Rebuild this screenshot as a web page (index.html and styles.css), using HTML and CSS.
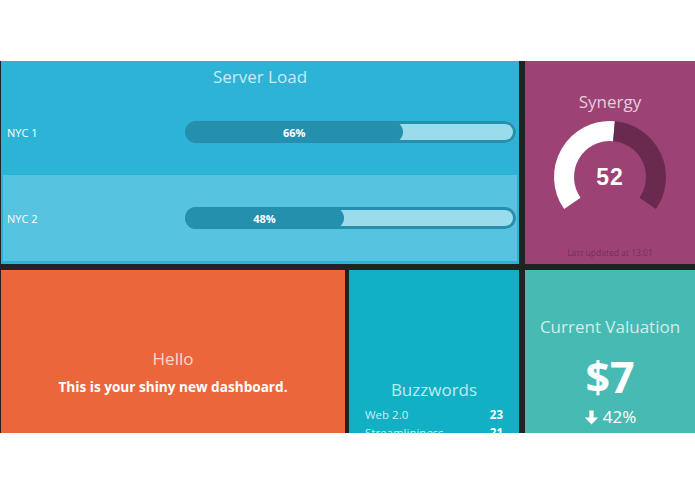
FILE: index.html
```html
<!DOCTYPE html>
<html lang="en">
<head>
    <meta charset="UTF-8">
    <meta name="viewport" content="width=device-width, initial-scale=1.0">
    <title>Dashboard</title>
    <link rel="stylesheet" href="styles.css">
</head>
<body>
    <div class="dashboard">
        <div class="widget server-load">
            <h1 class="title">Server Load</h1>
            <div class="rows">
                <div class="row">
                    <span class="label">NYC 1</span>
                    <div class="bar"><div class="fill" style="width: 66%">66%</div></div>
                </div>
                <div class="row active">
                    <span class="label">NYC 2</span>
                    <div class="bar"><div class="fill" style="width: 48%">48%</div></div>
                </div>
            </div>
        </div>

        <div class="widget synergy">
            <h1 class="title">Synergy</h1>
            <svg class="gauge" width="120" height="120" viewBox="0 0 120 120">
                <path d="M22.32 86.38 A46 46 0 0 1 64.01 14.18" fill="none" stroke="#fff" stroke-width="20"/>
                <path d="M64.01 14.18 A46 46 0 0 1 97.68 86.38" fill="none" stroke="#6a2a4f" stroke-width="20"/>
                <text x="60" y="68" text-anchor="middle" class="gauge-value">52</text>
            </svg>
            <p class="updated">Last updated at 13:01</p>
        </div>

        <div class="widget hello">
            <h1 class="title">Hello</h1>
            <h3 class="text">This is your shiny new dashboard.</h3>
        </div>

        <div class="widget buzzwords">
            <h1 class="title">Buzzwords</h1>
            <ul class="list">
                <li><span>Web 2.0</span><span class="value">23</span></li>
                <li><span>Streamlininess</span><span class="value">21</span></li>
            </ul>
        </div>

        <div class="widget valuation">
            <h1 class="title">Current Valuation</h1>
            <h2 class="value">$7</h2>
            <p class="change">
                <svg width="15" height="15" viewBox="0 0 14 14"><path d="M5 0.5h4v6.5h4.2L7 13.5 0.8 7H5z" fill="#fff"/></svg>
                42%
            </p>
        </div>
    </div>
</body>
</html>
```

FILE: styles.css
```css
body {
    margin: 0;
    background-color: #fff;
    font-family: "Open Sans", sans-serif;
    color: #fff;
}

.dashboard {
    margin-top: 61px;
    height: 372px;
    overflow: hidden;
    background-color: #222;
    padding-left: 1px;
    display: grid;
    grid-template-columns: 170px 170px 170px 1fr;
    grid-template-rows: 203px 203px;
    column-gap: 4px;
    row-gap: 6px;
}

.widget {
    text-align: center;
}

.title {
    margin: 0;
    font-size: 17px;
    font-weight: 400;
    line-height: 20px;
    color: rgba(255, 255, 255, 0.75);
}

/* server load */
.server-load {
    grid-column: 1 / 4;
    background-color: #2db3d6;
}

.server-load .title {
    margin-top: 6px;
}

.rows {
    margin-top: 2px;
    padding: 0 2px;
}

.row {
    display: flex;
    align-items: center;
    height: 86px;
    padding-left: 4px;
    padding-right: 1px;
}

.row.active {
    background-color: #56c3e0;
}

.label {
    width: 178px;
    text-align: left;
    font-size: 11px;
}

.bar {
    flex: 1;
    height: 22px;
    border-radius: 11px;
    background-color: #9bdcec;
    box-shadow: inset 0 0 0 3px #2590ae;
}

.fill {
    height: 100%;
    border-radius: 11px;
    background-color: #2590ae;
    display: flex;
    align-items: center;
    justify-content: center;
    font-size: 11px;
    font-weight: 700;
}

/* synergy meter */
.synergy {
    margin-left: 2px;
    background-color: #9c4274;
    display: flex;
    flex-direction: column;
    align-items: center;
}

.synergy .title {
    margin-top: 31px;
}

.gauge {
    margin-top: 5px;
}

.gauge-value {
    font-family: "Liberation Sans", Arial, sans-serif;
    font-size: 23px;
    font-weight: 700;
    letter-spacing: 1px;
    fill: #fff;
}

.updated {
    margin: 10px 0 0;
    font-size: 8.5px;
    line-height: 12px;
    color: rgba(0, 0, 0, 0.3);
}

/* text widget */
.hello {
    grid-column: 1 / 3;
    background-color: #ec663c;
    display: flex;
    flex-direction: column;
    justify-content: center;
    padding-top: 3px;
}

.hello .text {
    margin: 8px 0 0;
    font-size: 13.6px;
    font-weight: 700;
    line-height: 20px;
}

/* list widget */
.buzzwords {
    background-color: #12b0c5;
    padding: 110px 16px 0;
}

.list {
    list-style: none;
    margin: 6px 0 0;
    padding: 0;
}

.list li {
    display: flex;
    justify-content: space-between;
    font-size: 11.5px;
    line-height: 18px;
    color: rgba(255, 255, 255, 0.8);
}

.list .value {
    font-weight: 700;
    color: #fff;
}

/* number widget */
.valuation {
    margin-left: 2px;
    background-color: #47bbb3;
}

.valuation .title {
    margin-top: 47px;
}

.valuation .value {
    margin: 16px 0 0;
    font-size: 43px;
    font-weight: 700;
    line-height: 48px;
}

.change {
    margin: 6px 0 0;
    font-size: 17px;
    line-height: 20px;
    display: flex;
    align-items: center;
    justify-content: center;
    gap: 4px;
}
```
